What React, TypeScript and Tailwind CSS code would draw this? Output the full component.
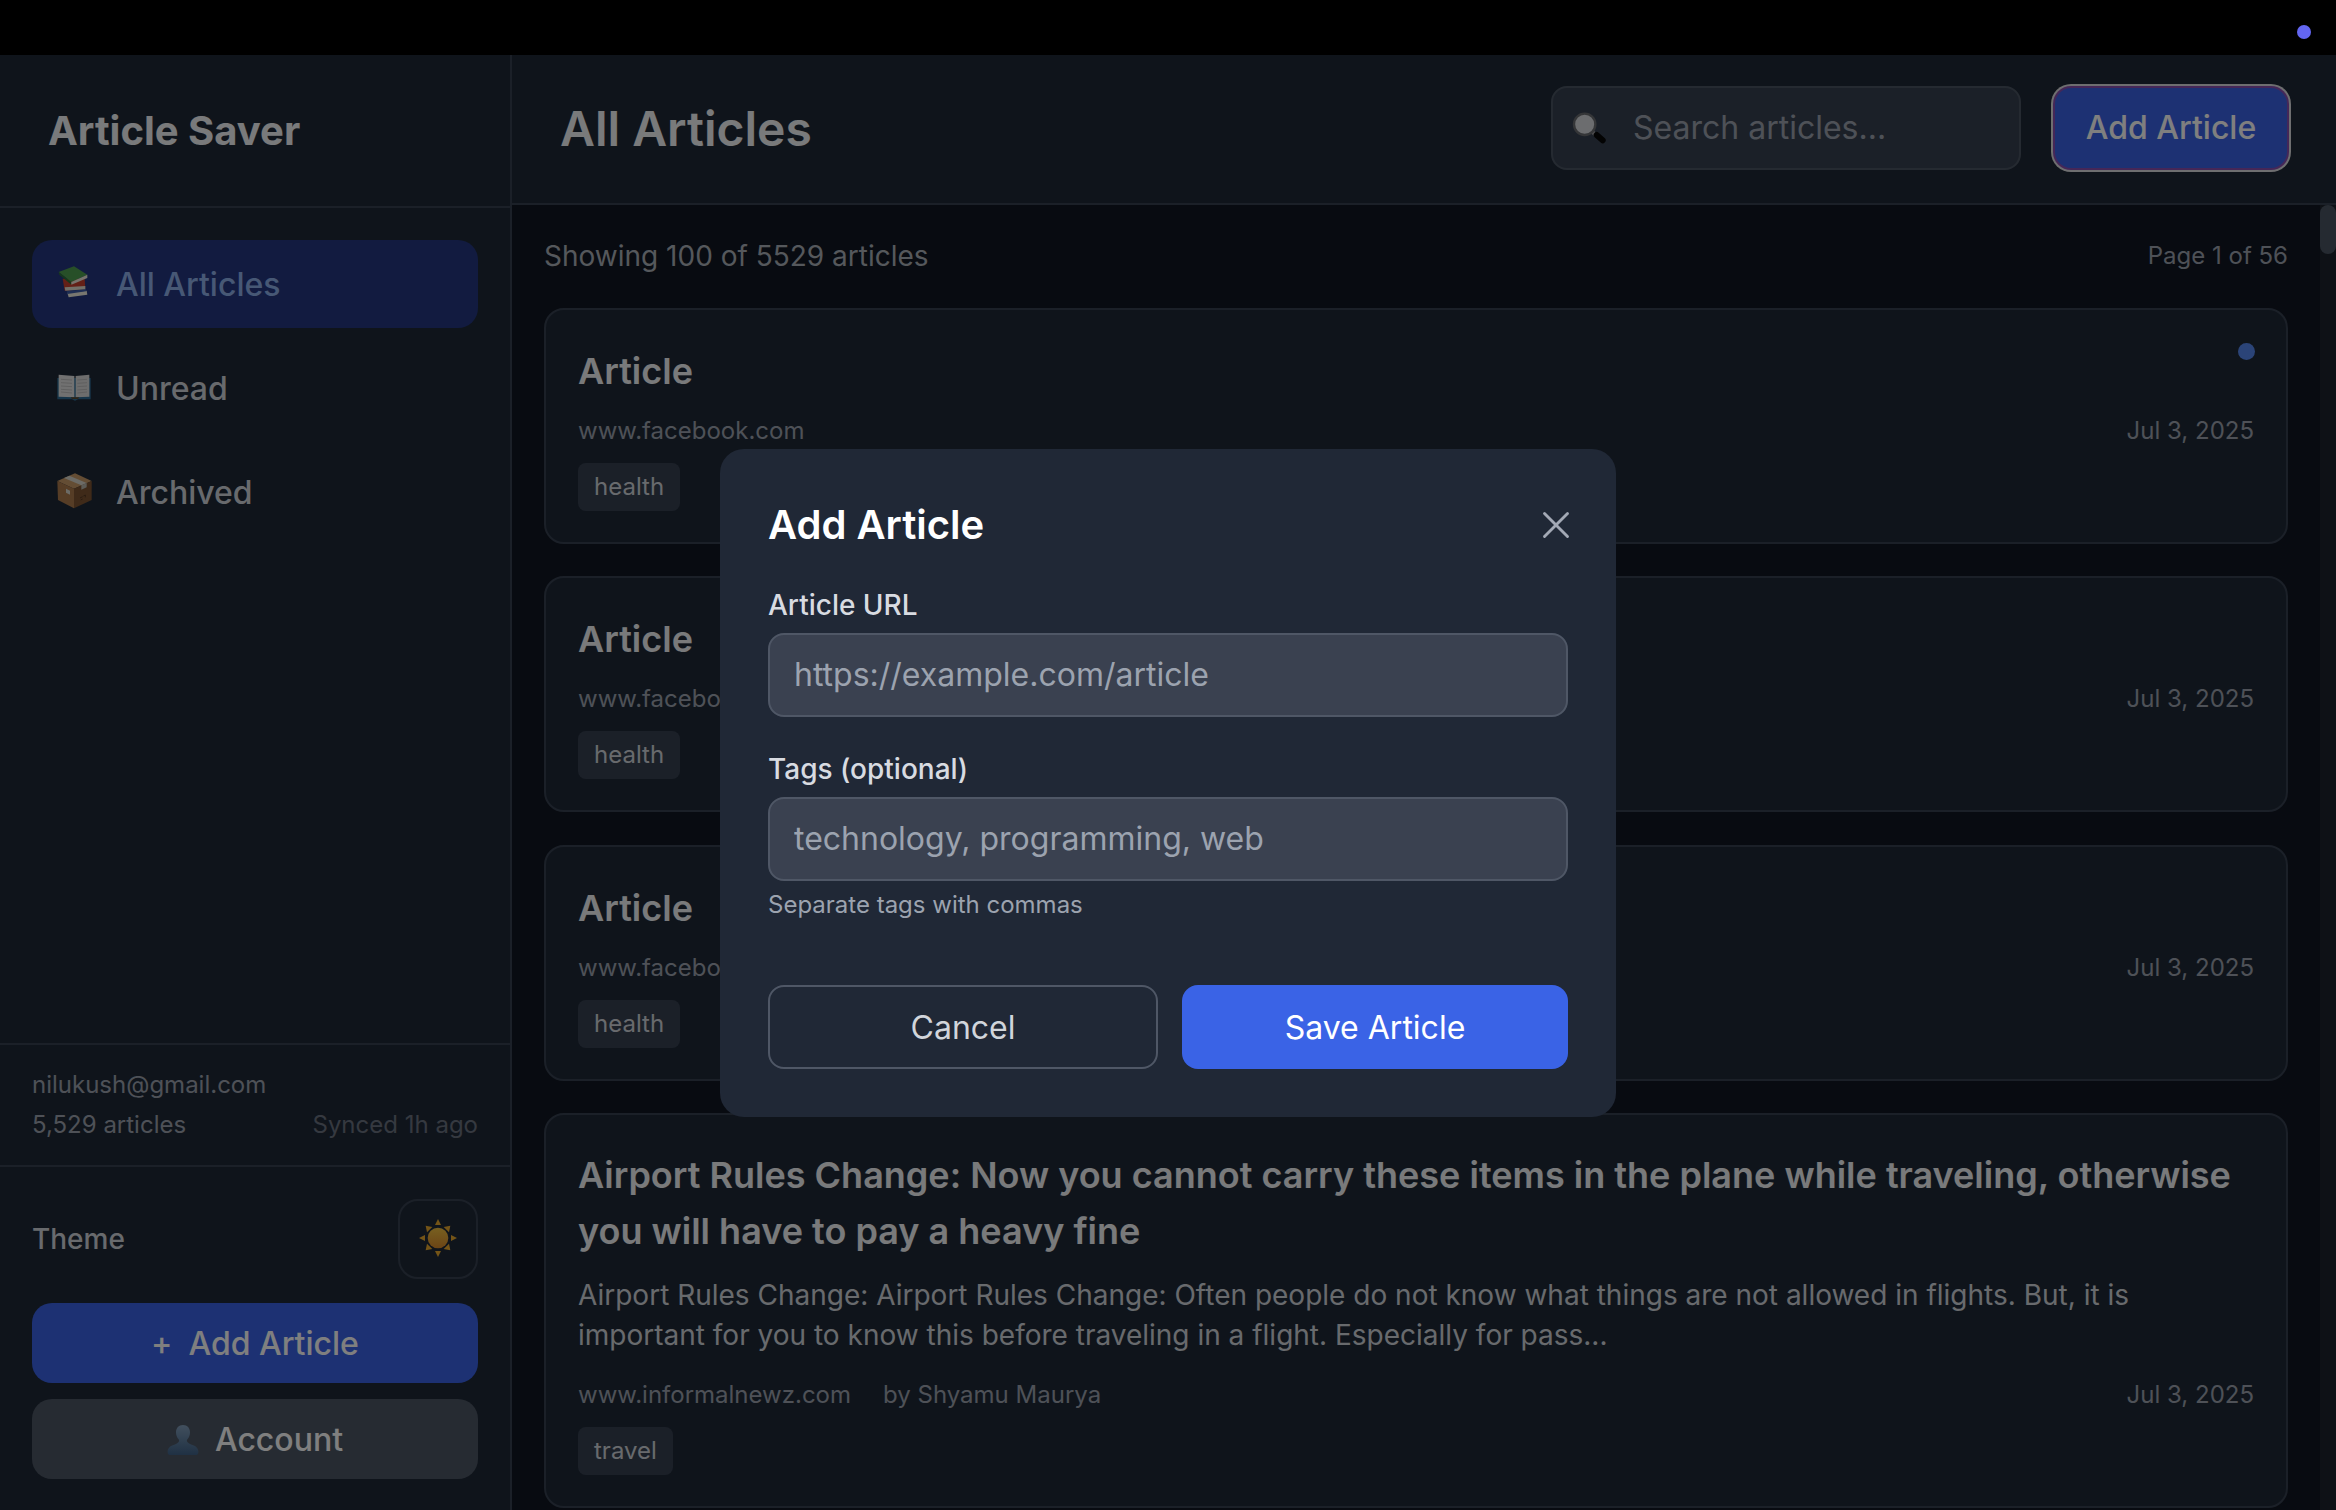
import { X } from "lucide-react";

function BooksIcon() {
  return (
    <svg width="50" height="50" viewBox="0 3 150 150" className="shrink-0 -ml-[6px]">
      <polygon points="52,104 110,98 112,110 56,118" fill="#f0eee0" />
      <polygon points="50,100 108,94 108,100 52,108" fill="#3c5ca8" />
      <polygon points="38,62 104,62 106,92 44,98" fill="#c8402f" />
      <polygon points="44,88 106,84 106,94 46,98" fill="#e4e0d2" />
      <polygon points="26,42 72,25 112,50 64,72" fill="#4f9f50" />
      <polygon points="26,42 64,72 64,80 28,50" fill="#2c7038" />
      <polygon points="64,72 112,50 112,60 64,80" fill="#ece8da" />
    </svg>
  );
}

function OpenBookIcon() {
  return (
    <svg width="50" height="50" viewBox="0 3 150 150" className="shrink-0 -ml-[6px]">
      <polygon points="22,48 122,48 122,112 84,112 75,116 66,112 22,112" fill="#2e6d96" />
      <polygon points="26,38 73,42 73,106 26,104" fill="#e2e2e2" />
      <polygon points="118,38 77,42 77,106 118,104" fill="#dadada" />
      <polygon points="62,106 88,106 84,111 66,111" fill="#5a4a30" />
      <g stroke="#b0b0b0" strokeWidth="2">
        <line x1="33" y1="52" x2="66" y2="54" />
        <line x1="33" y1="62" x2="66" y2="64" />
        <line x1="33" y1="72" x2="66" y2="74" />
        <line x1="33" y1="82" x2="66" y2="84" />
        <line x1="33" y1="90" x2="66" y2="93" />
        <line x1="82" y1="54" x2="111" y2="52" />
        <line x1="82" y1="64" x2="111" y2="62" />
        <line x1="82" y1="74" x2="111" y2="72" />
        <line x1="82" y1="84" x2="111" y2="82" />
        <line x1="82" y1="93" x2="111" y2="90" />
      </g>
    </svg>
  );
}

function PackageIcon() {
  return (
    <svg width="50" height="50" viewBox="0 3 150 150" className="shrink-0 -ml-[6px]">
      <polygon points="22,45 75,22 125,45 72,68" fill="#c89a68" />
      <polygon points="22,45 72,68 72,127 24,102" fill="#ad7a4c" />
      <polygon points="125,45 72,68 72,127 125,102" fill="#7e5532" />
      <polygon points="42,36 58,29 110,51 94,58" fill="#d8d6cc" />
      <polygon points="94,58 110,51 110,64 94,71" fill="#b8b6ac" />
      <polygon points="48,68 60,74 60,86 48,80" fill="#d8d6cc" />
      <g stroke="#4e3320" strokeWidth="2.5" fill="none">
        <path d="M90 96 l8 -4 M100 90 l6 -3 v7 M92 102 l6 -3" />
      </g>
    </svg>
  );
}

function MagnifierIcon() {
  return (
    <svg width="50" height="50" viewBox="0 0 150 150" className="shrink-0">
      <line x1="86" y1="88" x2="98" y2="98" stroke="#9a9a9e" strokeWidth="12" />
      <line x1="98" y1="96" x2="116" y2="112" stroke="#060606" strokeWidth="18" strokeLinecap="round" />
      <circle cx="62" cy="64" r="32" fill="#d8dade" stroke="#6a6c70" strokeWidth="7" />
    </svg>
  );
}

function SunIcon() {
  return (
    <svg width="50" height="50" viewBox="0 3 150 150">
      <defs>
        <linearGradient id="sunfill" x1="0" y1="0" x2="0" y2="1">
          <stop offset="0" stopColor="#f0c040" />
          <stop offset="1" stopColor="#d88a2c" />
        </linearGradient>
      </defs>
      <g fill="#e8a92e">
        <polygon points="75,18 66,36 84,36" />
        <polygon points="75,132 66,114 84,114" />
        <polygon points="18,75 36,66 36,84" />
        <polygon points="132,75 114,66 114,84" />
        <polygon points="38,38 58,42 42,58" />
        <polygon points="112,38 92,42 108,58" />
        <polygon points="38,112 58,108 42,92" />
        <polygon points="112,112 92,108 108,92" />
      </g>
      <circle cx="75" cy="75" r="31" fill="url(#sunfill)" />
    </svg>
  );
}

function BustIcon() {
  return (
    <svg width="32" height="32" viewBox="0 0 32 32" className="shrink-0">
      <defs>
        <linearGradient id="bustfill" x1="0" y1="0" x2="0" y2="1">
          <stop offset="0" stopColor="#84a0bc" />
          <stop offset="1" stopColor="#3f6288" />
        </linearGradient>
      </defs>
      <path
        d="M16 1c-4.4 0-7 3.2-7 7.4 0 2.8 1.1 5.2 2.6 6.8.5.6.6 1.6.3 2.4-.5 1.2-1.8 1.9-4 2.8C4.100 21.600 1 23 .6 27.500c-.1 1.200.6 3.500 1.800 3.500h27.200c1.200 0 1.900-2.300 1.800-3.500-.4-4.500-3.500-5.900-7.300-7.100-2.200-.9-3.500-1.600-4-2.800-.3-.8-.2-1.800.3-2.400 1.500-1.600 2.600-4 2.600-6.800C23 4.200 20.400 1 16 1z"
        fill="url(#bustfill)"
      />
    </svg>
  );
}

function NavItem({ icon, label, active }: { icon: React.ReactNode; label: string; active?: boolean }) {
  return (
    <div
      className={
        active
          ? "flex h-[88px] items-center gap-4 rounded-[20px] bg-[#243780] pl-6 text-[32px] font-medium text-[#8fb0ea]"
          : "flex h-[88px] items-center gap-4 rounded-[20px] pl-6 text-[32px] font-medium text-[#d1d5db]"
      }
    >
      {icon}
      <span className="pt-0.5">{label}</span>
    </div>
  );
}

function Tag({ label }: { label: string }) {
  return (
    <span className="inline-block h-12 rounded-lg bg-[#374151] px-4 text-2xl leading-[48px] text-[#d1d5db]">{label}</span>
  );
}

function Card({ unread }: { unread?: boolean }) {
  return (
    <article className="relative rounded-[20px] border-2 border-[#374151] bg-[#1f2937] px-8 pt-[33px] pb-[31px]">
      {unread && <span className="absolute right-[31px] top-[33px] h-[17px] w-[17px] rounded-full bg-[#5789f0]" />}
      <h3 className="text-4xl leading-[56px] font-semibold text-[#f3f4f6]">Article</h3>
      <div className="mt-[14px] flex items-center justify-between text-2xl leading-9 text-[#9ca3af]">
        <span>www.facebook.com</span>
        <span>Jul 3, 2025</span>
      </div>
      <div className="mt-[14px] flex">
        <Tag label="health" />
      </div>
    </article>
  );
}

function Field({ label, placeholder, help }: { label: string; placeholder: string; help?: string }) {
  return (
    <div>
      <label className="block text-[28px] leading-10 font-medium text-[#d8dbe1]">{label}</label>
      <input
        readOnly
        placeholder={placeholder}
        className="mt-2 block h-[84px] w-full rounded-2xl border-2 border-[#4f5766] bg-[#3a4150] px-6 text-[32px] text-white outline-none placeholder:text-[#9ca3af]"
      />
      {help && <p className="mt-2 text-2xl leading-8 text-[#9ca3af]">{help}</p>}
    </div>
  );
}

export default function App() {
  return (
    <div className="flex h-[1510px] w-full flex-col overflow-hidden bg-black font-[Inter,sans-serif]">
      <div className="flex h-[55px] shrink-0 items-start justify-end pt-[25px] pr-[25px]">
        <span className="h-[14px] w-[14px] rounded-full bg-[#6366f1]" />
      </div>

      <div className="relative flex min-h-0 flex-1">
        <aside className="flex w-[512px] shrink-0 flex-col border-r-2 border-[#374151] bg-[#1f2937]">
          <div className="flex h-[153px] items-center border-b-2 border-[#374151] pl-12">
            <h1 className="text-[40px] font-bold text-[#f3f4f6]">Article Saver</h1>
          </div>
          <nav className="flex flex-1 flex-col gap-4 px-8 pt-8">
            <NavItem active icon={<BooksIcon />} label="All Articles" />
            <NavItem icon={<OpenBookIcon />} label="Unread" />
            <NavItem icon={<PackageIcon />} label="Archived" />
          </nav>
          <div className="border-t-2 border-[#374151] px-8 pt-[22px] pb-[22px] text-2xl leading-9">
            <div className="text-[#9ca3af]">nilukush@gmail.com</div>
            <div className="mt-1 flex justify-between">
              <span className="text-[#9ca3af]">5,529 articles</span>
              <span className="text-[#6b7280]">Synced 1h ago</span>
            </div>
          </div>
          <div className="flex flex-col border-t-2 border-[#374151] px-8 pt-8 pb-[31px]">
            <div className="flex items-center justify-between">
              <span className="text-[28px] font-medium text-[#d1d5db]">Theme</span>
              <div className="flex h-20 w-20 items-center justify-center rounded-[20px] border-2 border-[#374151]">
                <SunIcon />
              </div>
            </div>
            <div className="mt-6 flex h-20 items-center justify-center gap-4 rounded-[20px] bg-[#3a63e6] pt-0.5 text-[32px] font-medium text-white">
              <span>+</span>
              <span>Add Article</span>
            </div>
            <div className="mt-4 flex h-20 items-center justify-center gap-4 rounded-[20px] bg-[#4d5765] pt-0.5 text-[32px] font-medium text-white">
              <BustIcon />
              <span>Account</span>
            </div>
          </div>
        </aside>

        <main className="flex min-w-0 flex-1 flex-col bg-[#111722]">
          <header className="flex h-[150px] shrink-0 items-center justify-between border-b-2 border-[#374151] bg-[#1f2937] pr-12 pl-12">
            <h2 className="text-5xl font-semibold text-[#f3f4f6]">All Articles</h2>
            <div className="mr-px mb-[2px] flex items-center gap-[34px]">
              <div className="flex h-[84px] w-[470px] items-center gap-[19px] rounded-2xl border-2 border-[#4b5563] bg-[#374151] pl-[11px]">
                <MagnifierIcon />
                <input
                  readOnly
                  placeholder="Search articles..."
                  className="min-w-0 flex-1 bg-transparent text-[32px] text-white outline-none placeholder:text-[#9ca3af]"
                />
              </div>
              <div className="flex h-20 w-[232px] items-center justify-center rounded-2xl bg-[#3a63e6] text-[32px] font-medium text-white shadow-[0_0_0_2px_#8a4fb0,0_0_0_4px_#dcdce0]">
                Add Article
              </div>
            </div>
          </header>

          <div className="flex min-h-0 flex-1">
            <div className="min-w-0 flex-1 overflow-hidden px-8 pt-[31px]">
              <div className="mb-8 flex items-center justify-between">
                <span className="text-[28px] leading-10 text-[#aab0b8]">Showing 100 of 5529 articles</span>
                <span className="text-2xl leading-10 text-[#9ca3af]">Page 1 of 56</span>
              </div>
              <div className="flex flex-col gap-[32.4px]">
                <Card unread />
                <Card />
                <Card />
                <article className="rounded-[20px] border-2 border-[#374151] bg-[#1f2937] px-8 pt-8 pb-[31px]">
                  <h3 className="text-4xl leading-[56px] font-semibold text-[#f3f4f6]">
                    Airport Rules Change: Now you cannot carry these items in the plane while traveling, otherwise you will have to pay a heavy fine
                  </h3>
                  <p className="mt-4 text-[28px] leading-10 text-[#d1d5db]">
                    Airport Rules Change: Airport Rules Change: Often people do not know what things are not allowed in flights. But, it is important for you to know this before traveling in a flight. Especially for pass...
                  </p>
                  <div className="mt-[22px] flex items-center justify-between text-2xl leading-9 text-[#9ca3af]">
                    <span className="flex gap-8">
                      <span>www.informalnewz.com</span>
                      <span>by Shyamu Maurya</span>
                    </span>
                    <span>Jul 3, 2025</span>
                  </div>
                  <div className="mt-[14px] flex">
                    <Tag label="travel" />
                  </div>
                </article>
              </div>
            </div>
            <div className="w-4 shrink-0 bg-[#1c222c]">
              <div className="h-[49px] w-4 rounded-full bg-[#4b5563]" />
            </div>
          </div>
        </main>

        <div className="absolute inset-0 flex items-center justify-center bg-black/50">
          <div className="w-[896px] rounded-3xl bg-[#202836] p-12">
            <div className="mb-8 flex h-14 items-center justify-between">
              <h2 className="text-[40px] font-semibold text-white">Add Article</h2>
              <X size={46} strokeWidth={1.5} className="-mr-[11px] text-[#a3a9b5]" />
            </div>
            <div className="flex flex-col gap-8">
              <Field label="Article URL" placeholder="https://example.com/article" />
              <Field label="Tags (optional)" placeholder="technology, programming, web" help="Separate tags with commas" />
            </div>
            <div className="mt-16 flex gap-6">
              <div className="flex h-[84px] flex-1 items-center justify-center rounded-2xl border-2 border-[#4f5766] pt-0.5 text-[32px] font-normal text-[#d1d5db]">
                Cancel
              </div>
              <div className="flex h-[84px] flex-1 items-center justify-center rounded-2xl bg-[#3a63e6] pt-0.5 text-[32px] font-normal text-white">
                Save Article
              </div>
            </div>
          </div>
        </div>
      </div>
    </div>
  );
}
